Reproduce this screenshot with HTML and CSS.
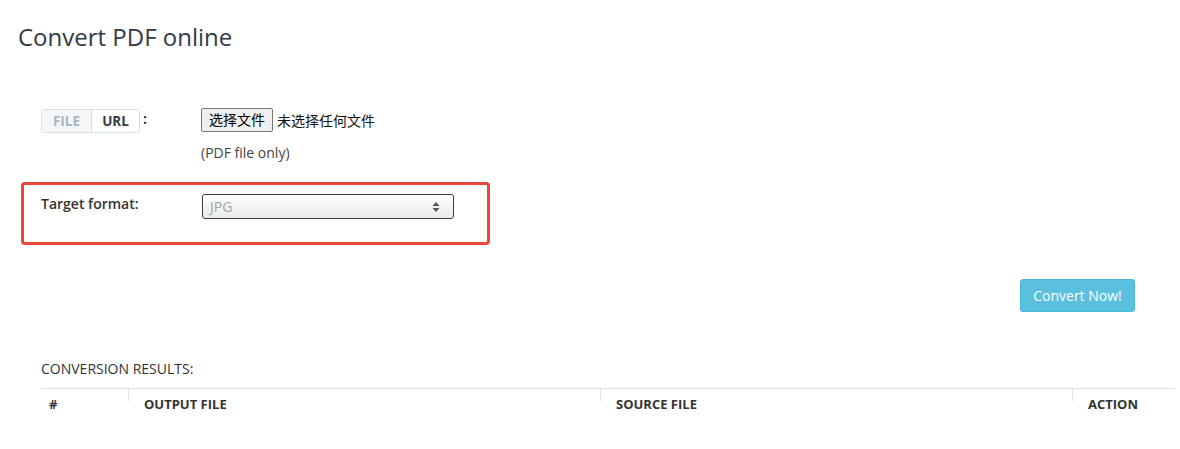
FILE: index.html
```html
<!DOCTYPE html>
<html>
<head>
<meta charset="utf-8">
<link rel="stylesheet" href="styles.css">
</head>
<body>
<div class="page">
  <h1 class="title">Convert PDF online</h1>
  <div class="form">
    <div class="row source-row">
      <div class="label-cell">
        <div class="toggle">
          <span class="seg seg-off">FILE</span><span class="seg seg-on">URL</span>
        </div>
        <span class="colon">:</span>
      </div>
      <div class="field-cell">
        <div class="file-input">
          <span class="file-btn">选择文件</span><span class="file-name">未选择任何文件</span>
        </div>
        <div class="hint">(PDF file only)</div>
      </div>
    </div>
    <div class="highlight">
      <div class="row target-row">
        <div class="label-cell"><span class="label">Target format:</span></div>
        <div class="field-cell">
          <div class="select">
            <span class="select-value">JPG</span>
            <svg class="select-arrows" width="8" height="12" viewBox="0 0 8 12"><path d="M4 1 L7.5 5 L0.5 5 Z" fill="#555"/><path d="M4 11 L7.5 7 L0.5 7 Z" fill="#555"/></svg>
          </div>
        </div>
      </div>
    </div>
    <div class="actions">
      <button class="convert-btn">Convert Now!</button>
    </div>
  </div>
  <div class="results">
    <div class="results-title">CONVERSION RESULTS:</div>
    <table class="results-table">
      <thead>
        <tr>
          <th class="col-num">#</th>
          <th class="col-out">OUTPUT FILE</th>
          <th class="col-src">SOURCE FILE</th>
          <th class="col-act">ACTION</th>
        </tr>
      </thead>
    </table>
  </div>
</div>
</body>
</html>
```

FILE: styles.css
```css
* { box-sizing: border-box; }
html, body { margin: 0; padding: 0; background: #fff; }
body {
  font-family: "Open Sans", "Noto Sans CJK SC", sans-serif;
  color: #333;
  width: 1180px;
  height: 449px;
  overflow: hidden;
}
.page { padding: 0 5px 0 0; }
.title {
  margin: 0;
  padding: 22px 0 0 18px;
  font-size: 24px;
  line-height: 29px;
  font-weight: 400;
  color: #313a47;
}
.form { padding: 57px 0 0 21px; }
.row {
  display: grid;
  grid-template-columns: 160px 1fr;
}
.source-row { padding-left: 20px; }
.label-cell { display: flex; align-items: flex-start; }
.toggle {
  display: flex;
  border: 1px solid #d6dfe8;
  border-radius: 3px;
  margin-top: 1px;
  overflow: hidden;
}
.seg {
  font-size: 13.5px;
  font-weight: 700;
  line-height: 22px;
  height: 22px;
  text-align: center;
}
.seg-off {
  width: 50px;
  background: #f4f6f8;
  color: #a9b6c5;
  border-right: 1px solid #d6dfe8;
}
.seg-on {
  width: 47px;
  background: #fff;
  color: #333c48;
}
.colon {
  font-size: 14px;
  font-weight: 700;
  line-height: 22px;
  margin-left: 3px;
  color: #333;
}
.file-input { display: flex; align-items: center; height: 24px; }
.file-btn {
  display: inline-block;
  height: 24px;
  line-height: 20px;
  padding: 0 7px 0 7px;
  background: #efefef;
  border: 1px solid #767676;
  border-radius: 2px;
  font-family: "Noto Sans CJK SC", sans-serif;
  font-size: 14px;
  color: #000;
}
.file-name {
  margin-left: 4px;
  font-family: "Noto Sans CJK SC", sans-serif;
  font-size: 14px;
  color: #111;
}
.hint {
  margin-top: 11px;
  font-size: 14px;
  line-height: 19px;
  color: #444;
}
.highlight {
  margin-top: 20px;
  width: 469px;
  height: 63px;
  border: 3px solid #e8473b;
  border-radius: 4px;
  padding: 9px 0 0 17px;
}
.label {
  font-size: 14px;
  font-weight: 600;
  line-height: 19px;
  display: block;
  color: #333;
}
.target-row .field-cell { padding-left: 1px; }
.select {
  width: 252px;
  height: 25px;
  border: 1px solid #3a3a3a;
  border-radius: 3px;
  background: linear-gradient(#ffffff, #ebebeb);
  display: flex;
  align-items: center;
  justify-content: space-between;
  padding: 0 13px 0 7px;
}
.select-value { font-size: 14px; color: #a0a4a8; }
.actions {
  display: flex;
  justify-content: flex-end;
  padding-right: 40px;
  margin-top: 34px;
}
.convert-btn {
  font-family: "Open Sans", sans-serif;
  font-size: 14px;
  color: #fff;
  background: #5bc0de;
  border: 1px solid #46b8da;
  border-radius: 3px;
  height: 33px;
  padding: 0 12px;
  width: 115px;
}
.results { padding: 47px 0 0 41px; }
.results-title {
  font-size: 14px;
  line-height: 19px;
  color: #333;
}
.results-table {
  margin-top: 10px;
  width: 1134px;
  border-collapse: collapse;
  border-top: 1px solid #dddddd;
}
.results-table th {
  text-align: left;
  font-size: 13px;
  font-weight: 700;
  color: #333;
  padding: 6px 16px 0;
  line-height: 18px;
  background: linear-gradient(#e3e3e3, #e3e3e3) left top / 1px 12px no-repeat;
}
.results-table th.col-num { padding-left: 8px; width: 87px; background: none; }
.results-table th.col-out { width: 472px; }
.results-table th.col-src { width: 472px; }
```
